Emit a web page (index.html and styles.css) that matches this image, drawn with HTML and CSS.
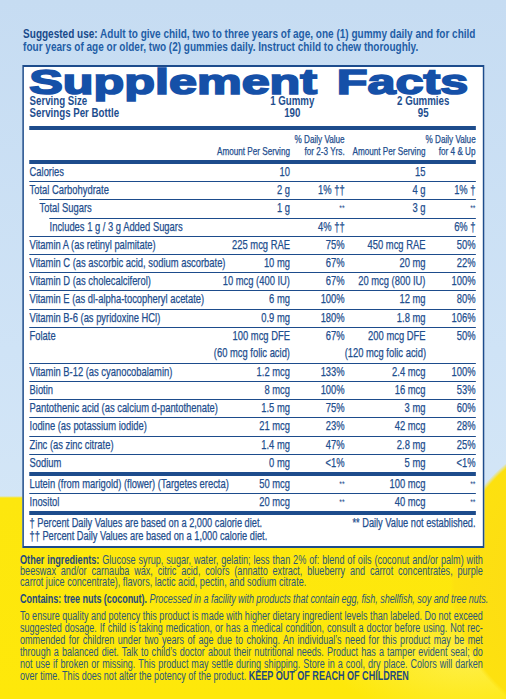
FILE: index.html
```html
<!DOCTYPE html>
<html>
<head>
<meta charset="utf-8">
<link rel="stylesheet" href="styles.css">
</head>
<body>
<div class="page">
  <p class="use"><b>Suggested use:</b> Adult to give child, two to three years of age, one (1) gummy daily and for child four years of age or older, two (2) gummies daily. Instruct child to chew thoroughly.</p>

  <section class="facts">
    <h1 class="title"><span>Supplement Facts</span></h1>
    <div class="serving">
      <div>Serving Size<br>Servings Per Bottle</div>
      <div class="c">1 Gummy<br>190</div>
      <div></div>
      <div class="c">2 Gummies<br>95</div>
      <div></div>
    </div>
    <div class="bar"></div>
    <div class="row head">
      <div></div>
      <div class="r">Amount Per Serving</div>
      <div class="r">% Daily Value<br>for 2-3 Yrs.</div>
      <div class="r">Amount Per Serving</div>
      <div class="r">% Daily Value<br>for 4 &amp; Up</div>
    </div>
    <div class="bar"></div>
    <div class="rows">
      <div class="row"><div>Calories</div><div class="r">10</div><div class="r"></div><div class="r">15</div><div class="r"></div></div>
      <div class="row"><div>Total Carbohydrate</div><div class="r">2 g</div><div class="r">1% ††</div><div class="r">4 g</div><div class="r">1% †</div></div>
      <div class="row in1"><div>Total Sugars</div><div class="r">1 g</div><div class="r st">**</div><div class="r">3 g</div><div class="r st">**</div></div>
      <div class="row in2"><div>Includes 1 g / 3 g Added Sugars</div><div class="r"></div><div class="r">4% ††</div><div class="r"></div><div class="r">6% †</div></div>
      <div class="row"><div>Vitamin A (as retinyl palmitate)</div><div class="r">225 mcg RAE</div><div class="r">75%</div><div class="r">450 mcg RAE</div><div class="r">50%</div></div>
      <div class="row"><div>Vitamin C (as ascorbic acid, sodium ascorbate)</div><div class="r">10 mg</div><div class="r">67%</div><div class="r">20 mg</div><div class="r">22%</div></div>
      <div class="row"><div>Vitamin D (as cholecalciferol)</div><div class="r">10 mcg (400 IU)</div><div class="r">67%</div><div class="r">20 mcg (800 IU)</div><div class="r">100%</div></div>
      <div class="row"><div>Vitamin E (as dl-alpha-tocopheryl acetate)</div><div class="r">6 mg</div><div class="r">100%</div><div class="r">12 mg</div><div class="r">80%</div></div>
      <div class="row"><div>Vitamin B-6 (as pyridoxine HCl)</div><div class="r">0.9 mg</div><div class="r">180%</div><div class="r">1.8 mg</div><div class="r">106%</div></div>
      <div class="row tall"><div>Folate</div><div class="r">100 mcg DFE<br>(60 mcg folic acid)</div><div class="r">67%</div><div class="r">200 mcg DFE<br>(120 mcg folic acid)</div><div class="r">50%</div></div>
      <div class="row"><div>Vitamin B-12 (as cyanocobalamin)</div><div class="r">1.2 mcg</div><div class="r">133%</div><div class="r">2.4 mcg</div><div class="r">100%</div></div>
      <div class="row"><div>Biotin</div><div class="r">8 mcg</div><div class="r">100%</div><div class="r">16 mcg</div><div class="r">53%</div></div>
      <div class="row"><div>Pantothenic acid (as calcium d-pantothenate)</div><div class="r">1.5 mg</div><div class="r">75%</div><div class="r">3 mg</div><div class="r">60%</div></div>
      <div class="row"><div>Iodine (as potassium iodide)</div><div class="r">21 mcg</div><div class="r">23%</div><div class="r">42 mcg</div><div class="r">28%</div></div>
      <div class="row"><div>Zinc (as zinc citrate)</div><div class="r">1.4 mg</div><div class="r">47%</div><div class="r">2.8 mg</div><div class="r">25%</div></div>
      <div class="row"><div>Sodium</div><div class="r">0 mg</div><div class="r">&lt;1%</div><div class="r">5 mg</div><div class="r">&lt;1%</div></div>
    </div>
    <div class="bar"></div>
    <div class="rows">
      <div class="row"><div>Lutein (from marigold) (flower) (Targetes erecta)</div><div class="r">50 mcg</div><div class="r st">**</div><div class="r">100 mcg</div><div class="r st">**</div></div>
      <div class="row"><div>Inositol</div><div class="r">20 mcg</div><div class="r st">**</div><div class="r">40 mcg</div><div class="r st">**</div></div>
    </div>
    <div class="bar"></div>
    <div class="notes">
      <div>† Percent Daily Values are based on a 2,000 calorie diet.<br>†† Percent Daily Values are based on a 1,000 calorie diet.</div>
      <div>** Daily Value not established.</div>
    </div>
  </section>

  <div class="fine">
    <p class="other"><b>Other ingredients:</b> Glucose syrup, sugar, water, gelatin; less than 2% of: blend of oils (coconut and/or palm) with beeswax and/or carnauba wax, citric acid, colors (annatto extract, blueberry and carrot concentrates, purple carrot&nbsp;juice concentrate), flavors, lactic acid, pectin, and sodium citrate.</p>
    <p class="contains"><b>Contains: tree nuts (coconut).</b> <i>Processed in a facility with products that contain egg, fish, shellfish, soy and tree nuts.</i></p>
    <p class="ensure">To ensure quality and potency this product is made with higher dietary ingredient levels than labeled. Do not exceed suggested dosage. If child is taking medication, or has a medical condition, consult a doctor before using. Not rec-ommended for children under two years of age due to choking. An individual’s need for this product may be met through a balanced diet. Talk to child’s doctor about their nutritional needs. Product has a tamper evident seal; do not use if broken or missing. This product may settle during shipping. Store in a cool, dry place. Colors will darken over time. This does not alter the potency of the product. <b>KEEP OUT OF REACH OF CHILDREN</b></p>
  </div>
</div>
</body>
</html>
```

FILE: styles.css
```css
html, body {
  margin: 0;
  padding: 0;
}
body {
  width: 506px;
  height: 699px;
  overflow: hidden;
  font-family: "Liberation Sans", Arial, sans-serif;
  background:
    radial-gradient(circle 150px at 600px 580px, #fcd81a 0, #fde10f 97%, rgba(253,225,15,0) 100%),
    radial-gradient(ellipse 140px 60px at 470px 660px, rgba(255,244,120,0.55) 0, rgba(255,244,120,0) 100%),
    linear-gradient(180deg, rgba(255,233,0,0) 0, rgba(255,233,0,0) 496px, #fde70e 498px, #fee80a 100%),
    linear-gradient(180deg, #c6dcf2 0, #cfe3f6 50%, #d8e9f7 100%);
}
/* the label type is a condensed face: lay out wide, then compress horizontally */
.page {
  width: 657px;
  padding-top: 28px;
  transform: scaleX(0.77);
  transform-origin: 0 0;
}
.use {
  margin: 0 30px 0 30px;
  font-size: 13px;
  line-height: 12.5px;
  font-weight: bold;
  color: #1f5ea6;
}
.use b {
  color: #17498a;
}
.facts {
  margin: 12px 0 0 28.6px;
  width: 600px;
  box-sizing: border-box;
  border: 2px solid #1d4c8c;
  border-left-width: 2.6px;
  border-right-width: 2.6px;
  background: #fff;
  padding: 0 9px 2px 7.8px;
  color: #1e4e8e;
  font-size: 12.2px;
  -webkit-text-stroke: 0.25px #1e4e8e;
}
.title {
  margin: 0;
  height: 29px;
  font-weight: 900;
  font-size: 35.5px;
  line-height: 30px;
  color: #1550a8;
  white-space: nowrap;
}
.title span {
  display: inline-block;
  transform: scaleX(1.84);
  transform-origin: 0 0;
  -webkit-text-stroke: 1.7px #1550a8;
  word-spacing: 4px;
}
.serving {
  display: grid;
  grid-template-columns: minmax(0, 1fr) 104px 66px 104px 16px;
  line-height: 11.5px;
  font-size: 12.6px;
  font-weight: bold;
  -webkit-text-stroke: 0;
  padding-bottom: 7px;
}
.serving .c {
  text-align: center;
}
.bar {
  height: 4px;
  background: #1d4c8c;
}
.row {
  display: grid;
  grid-template-columns: minmax(0, 1fr) 100px 71px 105px 65px;
  line-height: 17.2px;
  border-top: 1px solid #1d4c8c;
  white-space: nowrap;
}
.rows .row:first-child {
  border-top: none;
}
.row.head {
  border-top: none;
  font-size: 10.6px;
  line-height: 12px;
  align-items: end;
  padding: 3px 0 3px;
}
.row .r {
  text-align: right;
}
.row.tall {
  line-height: 17.5px;
}
.row.in1 {
  margin-left: 13px;
}
.row.in2 {
  margin-left: 26px;
}
.st {
  font-size: 9px;
  -webkit-text-stroke: 0;
}
.notes {
  display: flex;
  justify-content: space-between;
  font-size: 12px;
  line-height: 13.5px;
  padding-top: 1.5px;
}
/* fine print is narrower still */
.fine {
  margin-left: 26px;
  width: 639.4px;
  transform: scaleX(0.94);
  transform-origin: 0 0;
  color: #2c5878;
}
.other, .contains, .ensure {
  margin: 0;
  font-size: 12.5px;
  line-height: 10.8px;
  text-align: justify;
}
.fine b {
  color: #1f4a7e;
}
.other {
  font-size: 12.6px;
  padding-top: 7.3px;
}
.contains {
  margin-top: 5.9px;
  white-space: nowrap;
  letter-spacing: -0.08px;
}
.ensure {
  margin-top: 5.3px;
  line-height: 12px;
}
```
